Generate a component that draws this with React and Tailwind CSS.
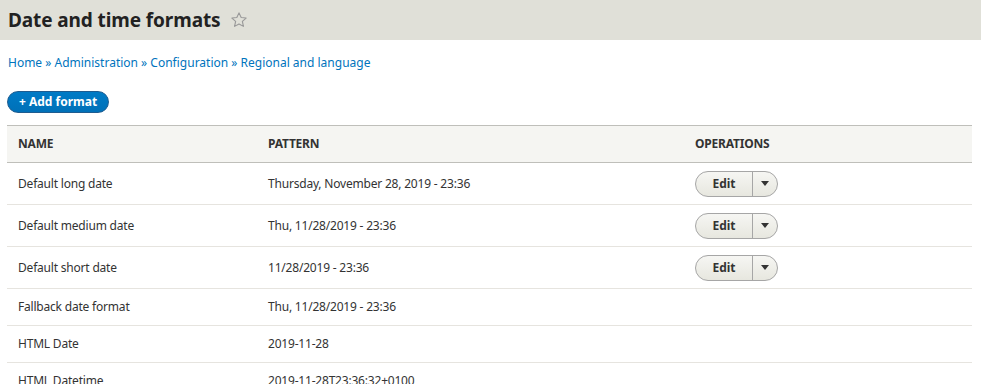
import React from "react";

const rows = [
  ["Default long date", "Thursday, November 28, 2019 - 23:36", true],
  ["Default medium date", "Thu, 11/28/2019 - 23:36", true],
  ["Default short date", "11/28/2019 - 23:36", true],
  ["Fallback date format", "Thu, 11/28/2019 - 23:36", false],
  ["HTML Date", "2019-11-28", false],
  ["HTML Datetime", "2019-11-28T23:36:32+0100", false],
];

function DropButton() {
  return (
    <div className="flex h-[26px] w-[83px] items-stretch rounded-full border border-[#a6a6a6] bg-gradient-to-b from-[#f6f6f3] to-[#e7e7df]">
      <div className="flex flex-1 items-center justify-center text-[12px] font-bold tracking-normal text-[#333]">Edit</div>
      <div className="w-px bg-[#a6a6a6]" />
      <div className="flex w-[24px] items-center justify-center">
        <svg width="8" height="5" viewBox="0 0 8 5"><path d="M0 0h8L4 5z" fill="#333" /></svg>
      </div>
    </div>
  );
}

export default function App() {
  return (
    <div className="h-[384px] w-[981px] overflow-hidden bg-white text-[#333]" style={{ fontFamily: '"Noto Sans", "DejaVu Sans", sans-serif' }}>
      <div className="flex h-10 items-center bg-[#e0e0d8] pl-2">
        <h1 className="text-[19px] font-bold leading-none tracking-[-0.1px] text-[#222]">Date and time formats</h1>
        <svg className="ml-[9px]" width="18" height="18" viewBox="0 0 24 24" fill="none" stroke="#999" strokeWidth="1.5">
          <path d="M12 2.5l2.9 6.2 6.6.7-5 4.5 1.4 6.6L12 17.2l-5.9 3.3 1.4-6.6-5-4.5 6.6-.7z" strokeLinejoin="round" />
        </svg>
      </div>
      <div className="pl-[7px] pr-[9px]">
        <div className="mt-[15px] pl-px text-[12px] leading-[16px] text-[#0074bd]">
          Home » Administration » Configuration » Regional and language
        </div>
        <div className="mt-[20px] flex">
          <button className="h-[22px] rounded-full border border-[#1e5c90] bg-gradient-to-b from-[#007bc6] to-[#0071b8] px-[11px] text-[12px] font-bold leading-none text-white">
            + Add format
          </button>
        </div>
        <table className="mt-[12px] w-full table-fixed border-collapse text-left text-[12px] tracking-[-0.2px]">
          <colgroup>
            <col className="w-[250px]" />
            <col className="w-[427px]" />
            <col />
          </colgroup>
          <thead>
            <tr className="h-[37px] border-y border-[#bfbfba] bg-[#f5f5f2]">
              <th className="pl-[11px] text-[12px] font-bold uppercase">Name</th>
              <th className="pl-[11px] text-[12px] font-bold uppercase">Pattern</th>
              <th className="pl-[11px] text-[12px] font-bold uppercase">Operations</th>
            </tr>
          </thead>
          <tbody>
            {rows.map(([name, pat, ops]) => (
              <tr key={name} className={`${ops ? "h-[42px]" : "h-[37px]"} border-b border-[#e6e4df]`}>
                <td className="pl-[11px]">{name}</td>
                <td className="pl-[11px]">{pat}</td>
                <td className="pl-[11px]">{ops ? <DropButton /> : null}</td>
              </tr>
            ))}
          </tbody>
        </table>
      </div>
    </div>
  );
}
